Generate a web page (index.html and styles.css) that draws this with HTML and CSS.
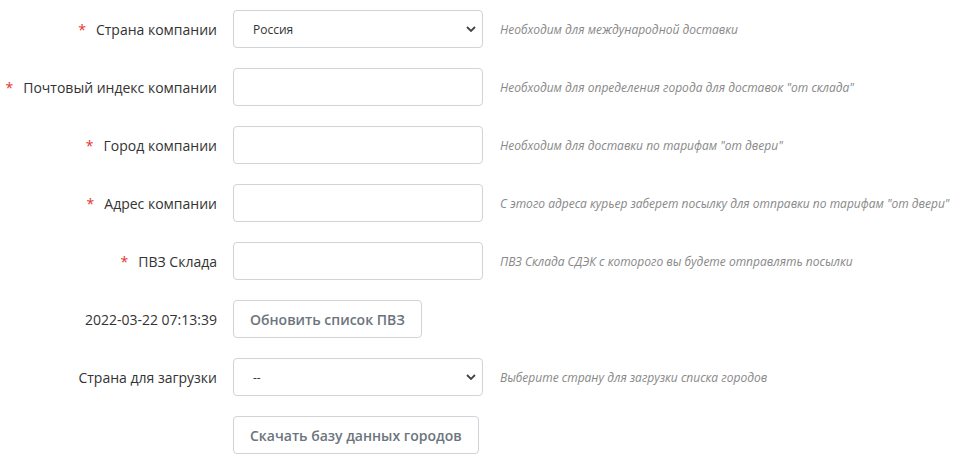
FILE: index.html
```html
<!DOCTYPE html>
<html lang="ru">
<head>
<meta charset="utf-8">
<link rel="stylesheet" href="styles.css">
</head>
<body>
<form class="form">
  <div class="row">
    <label class="label"><span class="req">*</span>Страна компании</label>
    <div class="control">
      <select class="select"><option>Россия</option></select>
    </div>
    <div class="help">Необходим для международной доставки</div>
  </div>
  <div class="row">
    <label class="label"><span class="req">*</span>Почтовый индекс компании</label>
    <div class="control"><input class="input" type="text"></div>
    <div class="help">Необходим для определения города для доставок "от склада"</div>
  </div>
  <div class="row">
    <label class="label"><span class="req">*</span>Город компании</label>
    <div class="control"><input class="input" type="text"></div>
    <div class="help">Необходим для доставки по тарифам "от двери"</div>
  </div>
  <div class="row">
    <label class="label"><span class="req">*</span>Адрес компании</label>
    <div class="control"><input class="input" type="text"></div>
    <div class="help">С этого адреса курьер заберет посылку для отправки по тарифам "от двери"</div>
  </div>
  <div class="row">
    <label class="label"><span class="req">*</span>ПВЗ Склада</label>
    <div class="control"><input class="input" type="text"></div>
    <div class="help">ПВЗ Склада СДЭК с которого вы будете отправлять посылки</div>
  </div>
  <div class="row">
    <label class="label">2022-03-22 07:13:39</label>
    <div class="control"><button type="button" class="btn">Обновить список ПВЗ</button></div>
    <div class="help"></div>
  </div>
  <div class="row">
    <label class="label">Страна для загрузки</label>
    <div class="control">
      <select class="select"><option>--</option></select>
    </div>
    <div class="help">Выберите страну для загрузки списка городов</div>
  </div>
  <div class="row">
    <label class="label"></label>
    <div class="control"><button type="button" class="btn">Скачать базу данных городов</button></div>
    <div class="help"></div>
  </div>
</form>
</body>
</html>
```

FILE: styles.css
```css
* { box-sizing: border-box; }
html, body { margin: 0; padding: 0; background: #fff; }
body {
  font-family: "Open Sans", "Noto Sans", sans-serif;
  font-size: 14px;
  color: #333;
}
.form {
  display: flex;
  flex-direction: column;
  gap: 20px;
  padding-top: 10px;
}
.row {
  display: grid;
  grid-template-columns: 217px 250px 1fr;
  column-gap: 16px;
  align-items: center;
  min-height: 38px;
}
.label {
  text-align: right;
  font-size: 14px;
  color: #333;
  white-space: nowrap;
}
.req {
  color: #e3342f;
  margin-right: 10px;
}
.control { display: flex; }
.input, .select {
  width: 250px;
  height: 38px;
  border: 1px solid #cfd4d9;
  border-radius: 4px;
  background: #fff;
  font-family: inherit;
  font-size: 12px;
  color: #333;
}
.input { padding: 0 12px; }
.select {
  appearance: none;
  -webkit-appearance: none;
  padding: 0 30px 0 19px;
  background-image: url("data:image/svg+xml;utf8,<svg xmlns='http://www.w3.org/2000/svg' width='10' height='6' viewBox='0 0 10 6'><path d='M1 1l4 4 4-4' fill='none' stroke='%23444' stroke-width='1.8'/></svg>");
  background-repeat: no-repeat;
  background-position: right 6px center;
}
.btn {
  height: 38px;
  padding: 0 16px;
  border: 1px solid #cfd4d9;
  border-radius: 4px;
  background: #fff;
  font-family: inherit;
  font-size: 14px;
  font-weight: 600;
  color: #6c757d;
}
.help {
  padding-left: 1px;
  font-size: 12px;
  font-style: italic;
  color: #888;
  white-space: nowrap;
}
```
